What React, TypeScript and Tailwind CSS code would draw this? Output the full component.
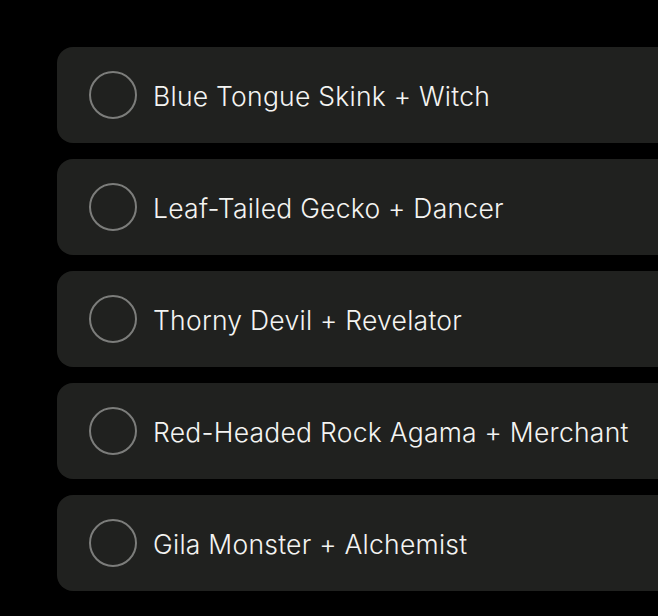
import React from "react";

const items = [
  "Blue Tongue Skink + Witch",
  "Leaf-Tailed Gecko + Dancer",
  "Thorny Devil + Revelator",
  "Red-Headed Rock Agama + Merchant",
  "Gila Monster + Alchemist",
];

export default function App() {
  return (
    <div
      className="w-[658px] h-[616px] bg-black overflow-hidden pt-[47px] pl-[57px]"
      style={{ fontFamily: "Inter, 'Noto Sans', sans-serif" }}
    >
      <div className="flex flex-col gap-4 w-[660px]">
        {items.map((t) => (
          <div
            key={t}
            className="h-[96px] rounded-2xl bg-[#20211f] flex items-center pl-8 gap-4"
          >
            <div className="w-12 h-12 rounded-full border-2 border-[#7c7d7b] shrink-0" />
            <span className="text-[26.5px] font-[350] tracking-[0.25px] text-[#f4f4f2] whitespace-nowrap pt-[3px]">
              {t}
            </span>
          </div>
        ))}
      </div>
    </div>
  );
}
